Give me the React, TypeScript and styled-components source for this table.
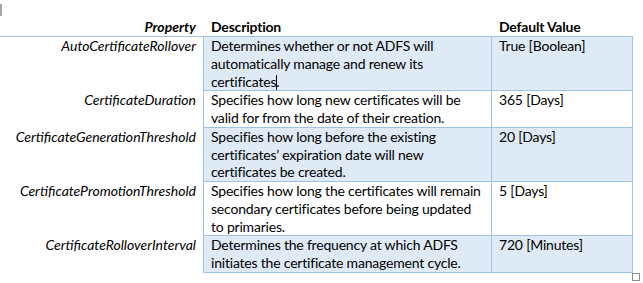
import React from 'react'
import styled, { createGlobalStyle } from 'styled-components'

const GlobalStyle = createGlobalStyle`
  html, body {
    margin: 0;
    padding: 0;
    background: #ffffff;
  }
  body {
    font-family: Lato, 'Liberation Sans', sans-serif;
    font-size: 14px;
    color: #000000;
  }
`

const BORDER = '#9dc3e6'
const SHADE = '#deeaf6'

const Page = styled.div`
  width: 643px;
  height: 283px;
  overflow: hidden;
`

const ParagraphMark = styled.div`
  width: 2px;
  height: 12px;
  margin-top: 4px;
  background: #a6a6a6;
`

const Grid = styled.div`
  margin-top: 2px;
  display: grid;
  grid-template-columns: 203px 288px 142px;
  width: 633px;
  line-height: 17.75px;
`

const HeadCell = styled.div<{ $right?: boolean; $italic?: boolean }>`
  box-sizing: border-box;
  height: 19px;
  padding: 0 7px 0 ${({ $right }) => ($right ? '7px' : '8px')};
  font-weight: 700;
  font-style: ${({ $italic }) => ($italic ? 'italic' : 'normal')};
  letter-spacing: ${({ $italic }) => ($italic ? '0' : '-0.2px')};
  text-align: ${({ $right }) => ($right ? 'right' : 'left')};
  border-bottom: 1px solid ${BORDER};
  white-space: nowrap;
`

const NameCell = styled.div`
  padding: 0 7px;
  font-style: italic;
  text-align: right;
  white-space: nowrap;
`

const DataCell = styled.div<{ $shaded: boolean; $last?: boolean }>`
  box-sizing: border-box;
  padding: 0 7px;
  white-space: nowrap;
  overflow: hidden;
  letter-spacing: -0.2px;
  border-left: 1px solid ${BORDER};
  border-bottom: 1px solid ${BORDER};
  border-right: ${({ $last }) => ($last ? `1px solid ${BORDER}` : 'none')};
  background: ${({ $shaded }) => ($shaded ? SHADE : 'transparent')};
`

const Caret = styled.span`
  display: inline-block;
  width: 1px;
  height: 15px;
  margin-right: -1px;
  vertical-align: -3px;
  background: #000000;
`

const EndMark = styled.div`
  width: 6px;
  height: 6px;
  margin-left: 632px;
  border: 1px solid #8c8c8c;
`

type Row = {
  name: string
  description: React.ReactNode[]
  value: string
}

const ROWS: Row[] = [
  {
    name: 'AutoCertificateRollover',
    description: [
      'Determines whether or not ADFS will',
      'automatically manage and renew its',
      <>
        certificates
        <Caret />.
      </>
    ],
    value: 'True [Boolean]'
  },
  {
    name: 'CertificateDuration',
    description: ['Specifies how long new certificates will be', 'valid for from the date of their creation.'],
    value: '365 [Days]'
  },
  {
    name: 'CertificateGenerationThreshold',
    description: [
      'Specifies how long before the existing',
      'certificates\u2019 expiration date will new',
      'certificates be created.'
    ],
    value: '20 [Days]'
  },
  {
    name: 'CertificatePromotionThreshold',
    description: [
      'Specifies how long the certificates will remain',
      'secondary certificates before being updated',
      'to primaries.'
    ],
    value: '5 [Days]'
  },
  {
    name: 'CertificateRolloverInterval',
    description: ['Determines the frequency at which ADFS', 'initiates the certificate management cycle.'],
    value: '720 [Minutes]'
  }
]

export default function App() {
  return (
    <Page>
      <GlobalStyle />
      <ParagraphMark />
      <Grid>
        <HeadCell $right $italic>
          Property
        </HeadCell>
        <HeadCell>Description</HeadCell>
        <HeadCell>Default Value</HeadCell>
        {ROWS.map((row, i) => (
          <React.Fragment key={row.name}>
            <NameCell>{row.name}</NameCell>
            <DataCell $shaded={i % 2 === 0}>
              {row.description.map((line, j) => (
                <React.Fragment key={j}>
                  {j > 0 && <br />}
                  {line}
                </React.Fragment>
              ))}
            </DataCell>
            <DataCell $shaded={i % 2 === 0} $last>
              {row.value}
            </DataCell>
          </React.Fragment>
        ))}
      </Grid>
      <EndMark />
    </Page>
  )
}
